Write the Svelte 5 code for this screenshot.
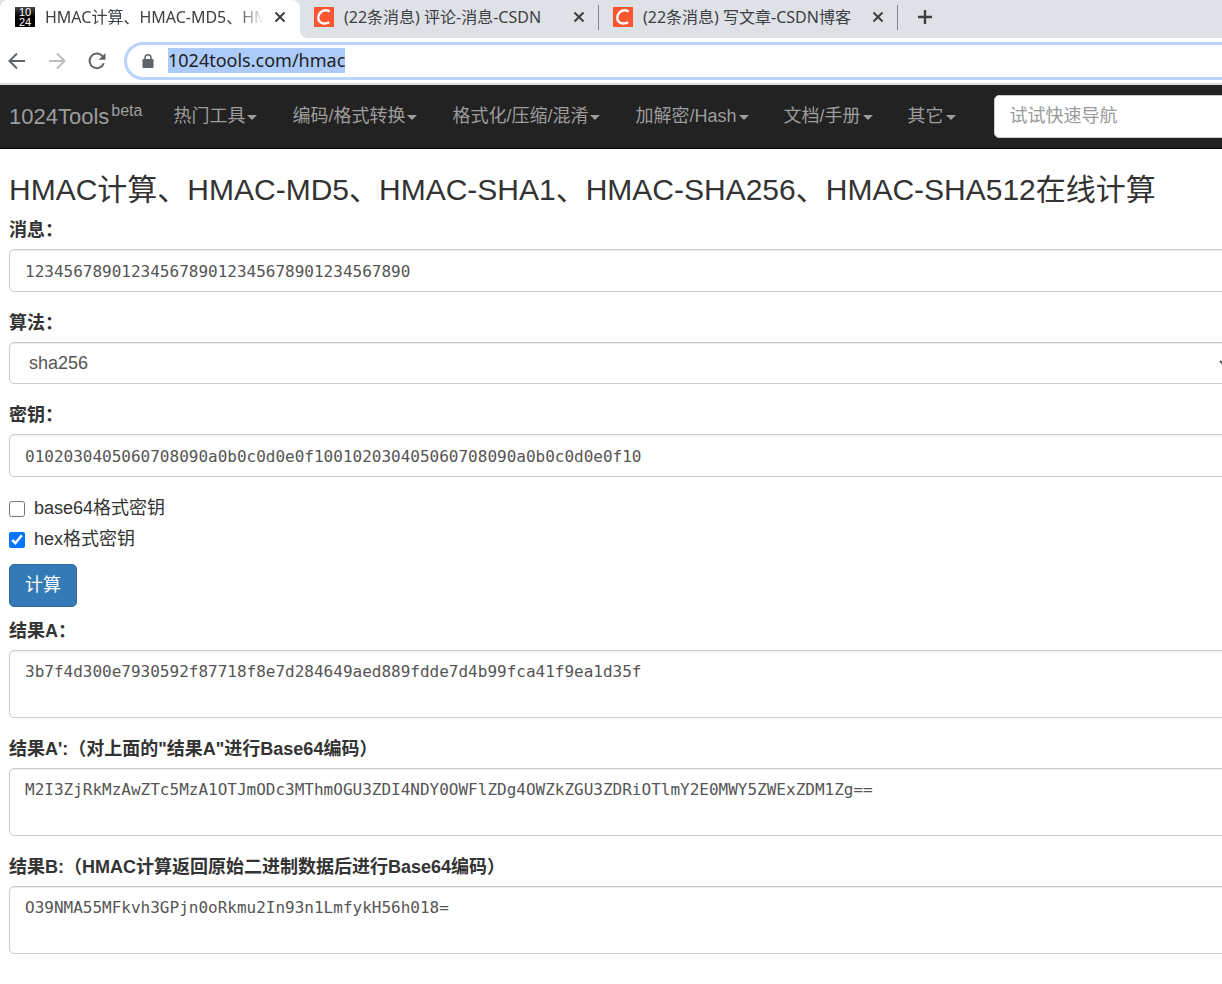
<script>
  import { onMount } from 'svelte';

  const tabs = [
    { title: '(22条消息) 评论-消息-CSDN' },
    { title: '(22条消息) 写文章-CSDN博客' },
  ];

  const menus = ['热门工具', '编码/格式转换', '格式化/压缩/混淆', '加解密/Hash', '文档/手册', '其它'];
  const algorithms = ['md5', 'sha1', 'sha256', 'sha384', 'sha512'];

  let url = $state('1024tools.com/hmac');
  let message = $state('1234567890123456789012345678901234567890');
  let algo = $state('sha256');
  let key = $state('0102030405060708090a0b0c0d0e0f100102030405060708090a0b0c0d0e0f10');
  let base64Key = $state(false);
  let hexKey = $state(true);

  let results = $state([
    { id: 'result-a', label: '结果A：', value: '3b7f4d300e7930592f87718f8e7d284649aed889fdde7d4b99fca41f9ea1d35f' },
    { id: 'result-a2', label: '结果A\':（对上面的"结果A"进行Base64编码）', value: 'M2I3ZjRkMzAwZTc5MzA1OTJmODc3MThmOGU3ZDI4NDY0OWFlZDg4OWZkZGU3ZDRiOTlmY2E0MWY5ZWExZDM1Zg==' },
    { id: 'result-b', label: '结果B:（HMAC计算返回原始二进制数据后进行Base64编码）', value: 'O39NMA55MFkvh3GPjn0oRkmu2In93n1LmfykH56h018=' },
  ]);

  let urlInput;

  onMount(() => {
    urlInput.focus({ preventScroll: true });
    urlInput.select();
  });
</script>

{#snippet closeIcon()}
  <button class="close" aria-label="关闭标签页">
    <svg viewBox="0 0 12 12" width="12" height="12">
      <path d="M1.5 1.5l9 9M10.5 1.5l-9 9" stroke="currentColor" stroke-width="2" />
    </svg>
  </button>
{/snippet}

<div class="window">
  <div class="tab-strip">
    <div class="tab active">
      <span class="favicon-1024"><span>10</span><span>24</span></span>
      <span class="tab-title">HMAC计算、HMAC-MD5、HM</span>
      {@render closeIcon()}
    </div>
    {#each tabs as tab}
      <div class="tab">
        <svg class="favicon" viewBox="0 0 20 20" width="20" height="20">
          <rect width="20" height="20" fill="#fc5531" />
          <path d="M15.6 4.3C12.5 2.9 8.8 3.3 6.6 5.4C4.1 7.8 3.6 12 5.3 14.3C7.2 16.9 11.8 17.2 15.2 15.3" fill="none" stroke="#fff" stroke-width="2.4" />
        </svg>
        <span class="tab-title">{tab.title}</span>
        {@render closeIcon()}
      </div>
    {/each}
    <button class="new-tab" aria-label="新标签页">
      <svg viewBox="0 0 16 16" width="16" height="16">
        <path d="M8 1v14M1 8h14" stroke="currentColor" stroke-width="2.4" />
      </svg>
    </button>
  </div>

  <div class="toolbar">
    <button class="tool" aria-label="后退">
      <svg viewBox="0 0 18 18" width="18" height="18" fill="none" stroke="currentColor" stroke-width="2">
        <path d="M17 9H2M9 1.5L1.5 9l7.5 7.5" />
      </svg>
    </button>
    <button class="tool disabled" aria-label="前进">
      <svg viewBox="0 0 18 18" width="18" height="18" fill="none" stroke="currentColor" stroke-width="2">
        <path d="M1 9h15M9 1.5L16.5 9L9 16.5" />
      </svg>
    </button>
    <button class="tool" aria-label="重新加载">
      <svg viewBox="0 0 18 18" width="18" height="18">
        <path d="M15.8 11.2A7.3 7.3 0 1 1 14.6 4.3" fill="none" stroke="currentColor" stroke-width="2" />
        <path d="M17.5 1v6.8h-6.8z" fill="currentColor" />
      </svg>
    </button>
    <div class="address">
      <svg viewBox="0 0 12 14" width="12" height="14">
        <path d="M3 6V3.8a3 3 0 0 1 6 0V6" fill="none" stroke="#5f6368" stroke-width="1.5" />
        <rect x="0.5" y="5" width="11" height="9" rx="1.2" fill="#5f6368" />
      </svg>
      <input bind:this={urlInput} bind:value={url} aria-label="地址栏" spellcheck="false" />
    </div>
  </div>

  <nav class="navbar">
    <a class="brand" href="#home">1024Tools<sup>beta</sup></a>
    <ul>
      {#each menus as menu}
        <li><a href="#menu">{menu}<span class="caret"></span></a></li>
      {/each}
    </ul>
    <input class="search" type="text" placeholder="试试快速导航" aria-label="试试快速导航" />
  </nav>

  <main>
    <h1>HMAC计算、HMAC-MD5、HMAC-SHA1、HMAC-SHA256、HMAC-SHA512在线计算</h1>

    <form onsubmit={(e) => e.preventDefault()}>
      <div class="group">
        <label for="message">消息：</label>
        <input id="message" class="control mono" type="text" bind:value={message} spellcheck="false" />
      </div>
      <div class="group">
        <label for="algo">算法：</label>
        <select id="algo" class="control" bind:value={algo}>
          {#each algorithms as a}
            <option value={a}>{a}</option>
          {/each}
        </select>
      </div>
      <div class="group">
        <label for="key">密钥：</label>
        <input id="key" class="control mono" type="text" bind:value={key} spellcheck="false" />
      </div>
      <div class="checks">
        <label><input type="checkbox" bind:checked={base64Key} />base64格式密钥</label>
        <label><input type="checkbox" bind:checked={hexKey} />hex格式密钥</label>
      </div>
      <button class="submit" type="submit">计算</button>

      {#each results as result}
        <div class="group">
          <label for={result.id}>{result.label}</label>
          <textarea id={result.id} class="control mono" rows="2" bind:value={result.value} spellcheck="false"></textarea>
        </div>
      {/each}
    </form>
  </main>
</div>

<style>
  :global(body) {
    margin: 0;
    background: #fff;
  }
  .window {
    overflow: clip;
    font: 18px/25px "Liberation Sans", "Noto Sans CJK SC", sans-serif;
    color: #333;
  }
  button {
    border: 0;
    padding: 0;
    background: none;
    font: inherit;
    color: inherit;
    cursor: pointer;
  }
  a {
    color: inherit;
    text-decoration: none;
  }

  /* browser tabs */
  .tab-strip {
    display: flex;
    height: 38px;
    background: #dee1e6;
    color: #3c4043;
    font: 16px/20px "Noto Sans", "Noto Sans CJK SC", sans-serif;
  }
  .tab {
    box-sizing: border-box;
    position: relative;
    display: flex;
    align-items: center;
    flex: 0 0 299px;
    min-width: 0;
    padding: 0 14px 4px 14px;
  }
  .tab.active {
    flex-basis: 300px;
    padding-left: 15px;
    background: #fff;
    border-radius: 8px 8px 0 0;
  }
  .tab.active::after {
    content: '';
    position: absolute;
    right: -8px;
    bottom: 0;
    width: 8px;
    height: 8px;
    background: radial-gradient(circle at 100% 0, transparent 8px, #fff 8px);
  }
  .tab:not(.active)::before {
    content: '';
    position: absolute;
    right: 0;
    top: 5px;
    width: 1px;
    height: 25px;
    background: #80868b;
  }
  .tab-title {
    flex: 1;
    min-width: 0;
    overflow: hidden;
    white-space: nowrap;
    margin: 0 10px;
  }
  .active .tab-title {
    mask-image: linear-gradient(to right, #000 88%, transparent);
  }
  .close {
    display: flex;
    flex: none;
    color: #3c4043;
  }
  .favicon {
    flex: none;
  }
  .favicon-1024 {
    display: flex;
    flex: none;
    flex-direction: column;
    width: 20px;
    height: 20px;
    background: linear-gradient(#444, #000 50%);
    color: #fff;
    font: 11px/10px "Liberation Sans", sans-serif;
    text-align: center;
  }
  .new-tab {
    display: flex;
    align-items: center;
    padding: 0 19px 4px;
  }

  /* browser toolbar */
  .toolbar {
    display: flex;
    align-items: center;
    gap: 22px;
    height: 45px;
    padding-left: 8px;
    border-bottom: 2px solid #dadce0;
  }
  .tool {
    display: flex;
    color: #5f6368;
  }
  .tool.disabled {
    color: #babcbe;
  }
  .address {
    box-sizing: border-box;
    display: flex;
    align-items: center;
    gap: 14px;
    flex: 1;
    height: 38px;
    margin: 0 -30px 0 -4px;
    padding-left: 15px;
    border: 3px solid #b9d4fa;
    border-radius: 19px;
  }
  .address input {
    flex: 1;
    border: 0;
    padding: 0;
    outline: 0;
    height: 25px;
    background: none;
    color: #202124;
    font: 18px/25px "Noto Sans", sans-serif;
  }
  .address input::selection {
    background: #accbf9;
    color: #202124;
  }

  /* site navbar */
  .navbar {
    display: flex;
    align-items: center;
    height: 63px;
    padding-left: 9px;
    background: #222;
    border-bottom: 1px solid #080808;
    color: #9d9d9d;
    white-space: nowrap;
  }
  .brand {
    font-size: 22px;
    margin-right: 31px;
  }
  .brand sup {
    font-size: 16px;
    line-height: 0;
    margin-left: 2px;
  }
  .navbar ul {
    display: flex;
    gap: 35px;
    margin: 0;
    padding: 0;
    list-style: none;
  }
  .caret {
    display: inline-block;
    margin-left: 2px;
    vertical-align: middle;
    border-top: 5px solid;
    border-left: 5px solid transparent;
    border-right: 5px solid transparent;
  }
  .search {
    box-sizing: border-box;
    flex: 1;
    height: 43px;
    margin: 0 -20px 0 38px;
    padding: 0 15px;
    border: 1px solid #ccc;
    border-radius: 5px;
    background: #fff;
    font: inherit;
  }
  .search::placeholder {
    color: #999;
  }

  main {
    padding: 24px 0 12px 9px;
  }
  h1 {
    margin: 0 0 12px;
    font-size: 30px;
    line-height: 33px;
    font-weight: 400;
    white-space: nowrap;
  }
  .group {
    margin-bottom: 19px;
  }
  .group label {
    display: block;
    margin-bottom: 6px;
    font-weight: 700;
  }
  /* fields run past the right edge of the window */
  .control {
    box-sizing: border-box;
    display: block;
    width: calc(100% + 11px);
    height: 43px;
    padding: 8px 15px 6px;
    border: 1px solid #ccc;
    border-radius: 5px;
    background: #fff;
    box-shadow: inset 0 1px 1px rgba(0, 0, 0, 0.075);
    color: #555;
    font: inherit;
  }
  select.control {
    height: 42px;
    padding: 7px 15px;
  }
  .mono {
    font: 16px/25px "DejaVu Sans Mono", monospace;
  }
  textarea.control {
    height: 68px;
    resize: vertical;
  }
  .checks {
    display: flex;
    flex-direction: column;
    align-items: flex-start;
    gap: 6px;
    margin-bottom: 12px;
  }
  .checks label {
    display: flex;
    align-items: center;
    gap: 9px;
  }
  .checks input {
    width: 16px;
    height: 16px;
    margin: 0;
  }
  .submit {
    display: block;
    height: 43px;
    margin-bottom: 12px;
    padding: 0 15px;
    border: 1px solid #2e6da4;
    border-radius: 5px;
    background: #337ab7;
    color: #fff;
  }
</style>
